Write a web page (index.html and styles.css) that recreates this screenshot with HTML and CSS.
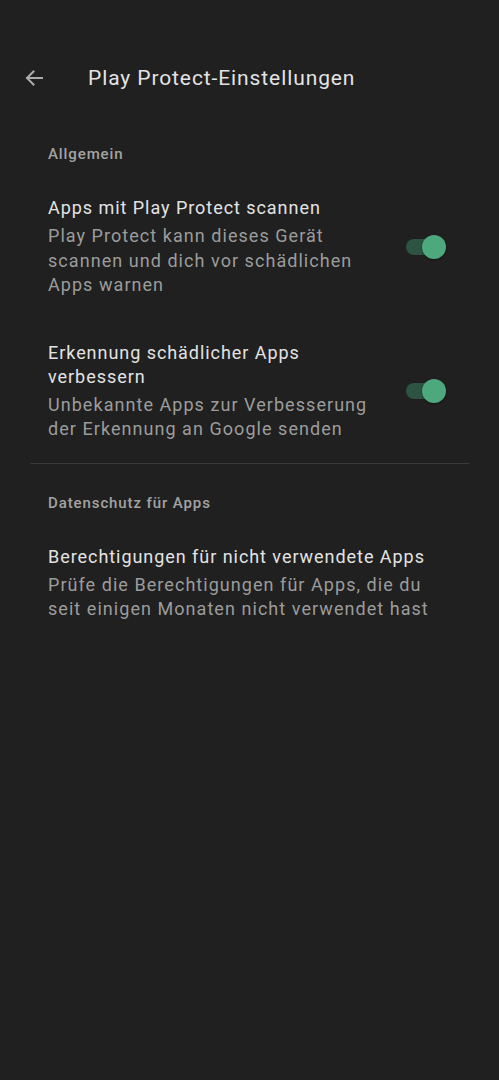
FILE: index.html
```html
<!DOCTYPE html>
<html lang="de">
<head>
<meta charset="utf-8">
<link rel="stylesheet" href="styles.css">
</head>
<body>
<div class="screen">
  <header class="appbar">
    <button class="back" aria-label="Zurück">
      <svg width="24" height="24" viewBox="0 0 24 24"><path d="M20 12H5M11.5 5.5L5 12l6.5 6.5" fill="none" stroke="currentColor" stroke-width="2" stroke-linecap="square"/></svg>
    </button>
    <h1 class="title">Play Protect-Einstellungen</h1>
  </header>

  <section class="section first">
    <h2 class="section-title">Allgemein</h2>
    <div class="item">
      <div class="text">
        <div class="item-title">Apps mit Play Protect scannen</div>
        <div class="item-summary">Play Protect kann dieses Gerät scannen und dich vor schädlichen Apps warnen</div>
      </div>
      <div class="switch on"><span class="track"></span><span class="thumb"></span></div>
    </div>
    <div class="item">
      <div class="text">
        <div class="item-title">Erkennung schädlicher Apps verbessern</div>
        <div class="item-summary">Unbekannte Apps zur Verbesserung der Erkennung an Google senden</div>
      </div>
      <div class="switch on"><span class="track"></span><span class="thumb"></span></div>
    </div>
  </section>

  <hr class="divider">

  <section class="section">
    <h2 class="section-title">Datenschutz für Apps</h2>
    <div class="item wide">
      <div class="text">
        <div class="item-title">Berechtigungen für nicht verwendete Apps</div>
        <div class="item-summary">Prüfe die Berechtigungen für Apps, die du seit einigen Monaten nicht verwendet hast</div>
      </div>
    </div>
  </section>
</div>
</body>
</html>
```
FILE: styles.css
```css
html, body {
  margin: 0;
  padding: 0;
  background: #202020;
}
body {
  font-family: Roboto, "Noto Sans", "Liberation Sans", sans-serif;
  color: #e3e3e3;
  width: 499px;
  height: 1080px;
}
.screen {
  padding-top: 50px;
}
.appbar {
  display: flex;
  align-items: center;
  height: 56px;
}
.back {
  display: flex;
  align-items: center;
  justify-content: center;
  width: 24px;
  height: 24px;
  margin-left: 22px;
  padding: 0;
  border: 0;
  background: none;
  color: #ababab;
}
.title {
  margin: 0 0 0 42px;
  font-size: 21px;
  font-weight: 400;
  line-height: 28px;
  letter-spacing: 0.9px;
  color: #e3e3e3;
}
.section-title {
  margin: 0;
  padding: 0 48px 10px;
  font-size: 15px;
  line-height: 20px;
  font-weight: 500;
  letter-spacing: 0.9px;
  color: #a3a3a3;
}
.section.first {
  padding-top: 38px;
}
.section {
  padding-top: 29px;
}
.item {
  display: flex;
  align-items: center;
  padding: 22px 53px 21px 48px;
  gap: 20px;
}
.item.wide {
  padding-right: 60px;
}
.text {
  flex: 1;
}
.item-title {
  font-size: 18px;
  line-height: 24px;
  letter-spacing: 0.95px;
  color: #e3e3e3;
}
.item-summary {
  margin-top: 4px;
  font-size: 18px;
  line-height: 24.5px;
  letter-spacing: 1.05px;
  color: #9c9c9c;
}
.switch {
  position: relative;
  flex: none;
  width: 40px;
  height: 24px;
}
.track {
  position: absolute;
  left: 0;
  top: 4px;
  width: 34px;
  height: 16px;
  border-radius: 8px;
  background: #2d5342;
}
.thumb {
  position: absolute;
  right: 0;
  top: 0;
  width: 24px;
  height: 24px;
  border-radius: 50%;
  background: #4ea87d;
  box-shadow: 0 1px 2px rgba(0,0,0,0.4);
}
.divider {
  margin: 0 30px;
  border: 0;
  height: 1px;
  background: #3a3a3a;
}
```
